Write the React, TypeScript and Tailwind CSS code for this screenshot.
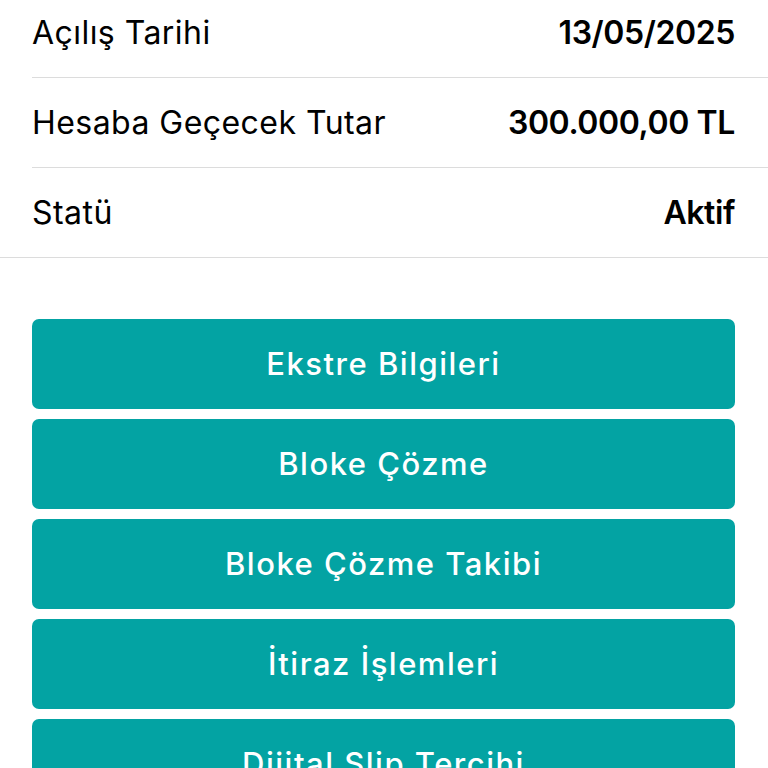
const rows = [
  { label: "Açılış Tarihi", value: "13/05/2025" },
  { label: "Hesaba Geçecek Tutar", value: "300.000,00 TL" },
  { label: "Statü", value: "Aktif" },
];

const actions = [
  "Ekstre Bilgileri",
  "Bloke Çözme",
  "Bloke Çözme Takibi",
  "İtiraz İşlemleri",
  "Dijital Slip Tercihi",
];

export default function App() {
  return (
    <div
      className="h-[768px] overflow-hidden bg-white text-black"
      style={{ fontFamily: "Inter, 'Noto Sans', sans-serif" }}
    >
      <div className="-mt-[12px]">
        {rows.map((row, i) => (
          <div
            key={row.label}
            className={
              i === rows.length - 1
                ? "border-b border-[#dcdcdc]"
                : "ml-8 border-b border-[#dcdcdc]"
            }
          >
            <div
              className={
                i === rows.length - 1
                  ? "flex h-[89px] items-center justify-between pl-8 pr-[33px]"
                  : "flex h-[89px] items-center justify-between pr-[33px]"
              }
            >
              <span className="text-[32px] tracking-[0.45px]">{row.label}</span>
              <span className="text-[32px] font-semibold tracking-[-0.4px]">
                {row.value}
              </span>
            </div>
          </div>
        ))}
      </div>

      <div className="mt-[61px] flex flex-col gap-[10px] px-8 pr-[33px]">
        {actions.map((label) => (
          <button
            key={label}
            type="button"
            className="flex h-[90px] shrink-0 items-center justify-center rounded-[7px] bg-[#03a3a3] text-[31px] font-medium tracking-[1.5px] text-white"
          >
            {label}
          </button>
        ))}
      </div>
    </div>
  );
}
